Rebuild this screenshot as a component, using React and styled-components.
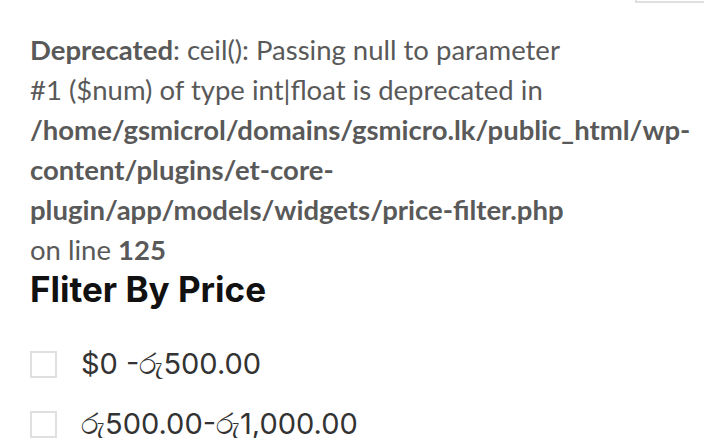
import React from "react";
import styled, { createGlobalStyle } from "styled-components";

const GlobalStyle = createGlobalStyle`
  html, body {
    margin: 0;
    padding: 0;
    background: #fff;
  }
  body {
    width: 704px;
    height: 438px;
    overflow: hidden;
  }
`;

const prices = [
  { id: "p1", label: "$0 -රු500.00" },
  { id: "p2", label: "රු500.00-රු1,000.00" },
];

const App = () => {
  return (
    <Page>
      <GlobalStyle />
      <TopBar>
        <SearchEdge />
      </TopBar>
      <Widget>
        <Notice>
          <b>Deprecated</b>: ceil(): Passing null to parameter #1 ($num) of
          type int|float is deprecated in{" "}
          <b>
            /home/gsmicrol/domains/gsmicro.lk/public_html/wp-content/plugins/et-core-plugin/app/models/widgets/price-filter.php
          </b>{" "}
          on line <b>125</b>
        </Notice>
        <Title>Fliter By Price</Title>
        <List>
          {prices.map((p) => (
            <Item key={p.id}>
              <Box type="checkbox" id={p.id} />
              <Label htmlFor={p.id}>{p.label}</Label>
            </Item>
          ))}
        </List>
      </Widget>
    </Page>
  );
};

const Page = styled.div`
  width: 704px;
  height: 438px;
  overflow: hidden;
  background: #fff;
`;

const TopBar = styled.div`
  display: flex;
  justify-content: flex-end;
  height: 3px;
`;

const SearchEdge = styled.div`
  width: 80px;
  height: 40px;
  margin-top: -37px;
  margin-right: -11px;
  border: 2px solid #e0e0e0;
  box-sizing: border-box;
`;

const Widget = styled.div`
  width: 556px;
  padding: 27px 0 0 30px;
`;

const Notice = styled.div`
  font-family: Lato, "Liberation Sans", sans-serif;
  font-size: 27.5px;
  line-height: 40px;
  color: #595959;

  b {
    font-weight: 700;
  }
`;

const Title = styled.h3`
  margin: 2px 0 0;
  font-family: Inter, Roboto, sans-serif;
  font-size: 35px;
  line-height: 35px;
  font-weight: 700;
  color: #111;
`;

const List = styled.ul`
  list-style: none;
  margin: 44px 0 0;
  padding: 0;
  display: flex;
  flex-direction: column;
  gap: 33px;
`;

const Item = styled.li`
  display: flex;
  align-items: center;
  gap: 24px;
  height: 27px;
`;

const Box = styled.input`
  appearance: none;
  flex: none;
  margin: 0;
  width: 27px;
  height: 27px;
  border: 2px solid #e0e0e0;
  background: #fff;
  box-sizing: border-box;
`;

const Label = styled.label`
  font-family: Inter, Roboto, sans-serif;
  font-size: 29px;
  line-height: 1.2;
  color: #333;
  white-space: nowrap;
`;

export default App;
